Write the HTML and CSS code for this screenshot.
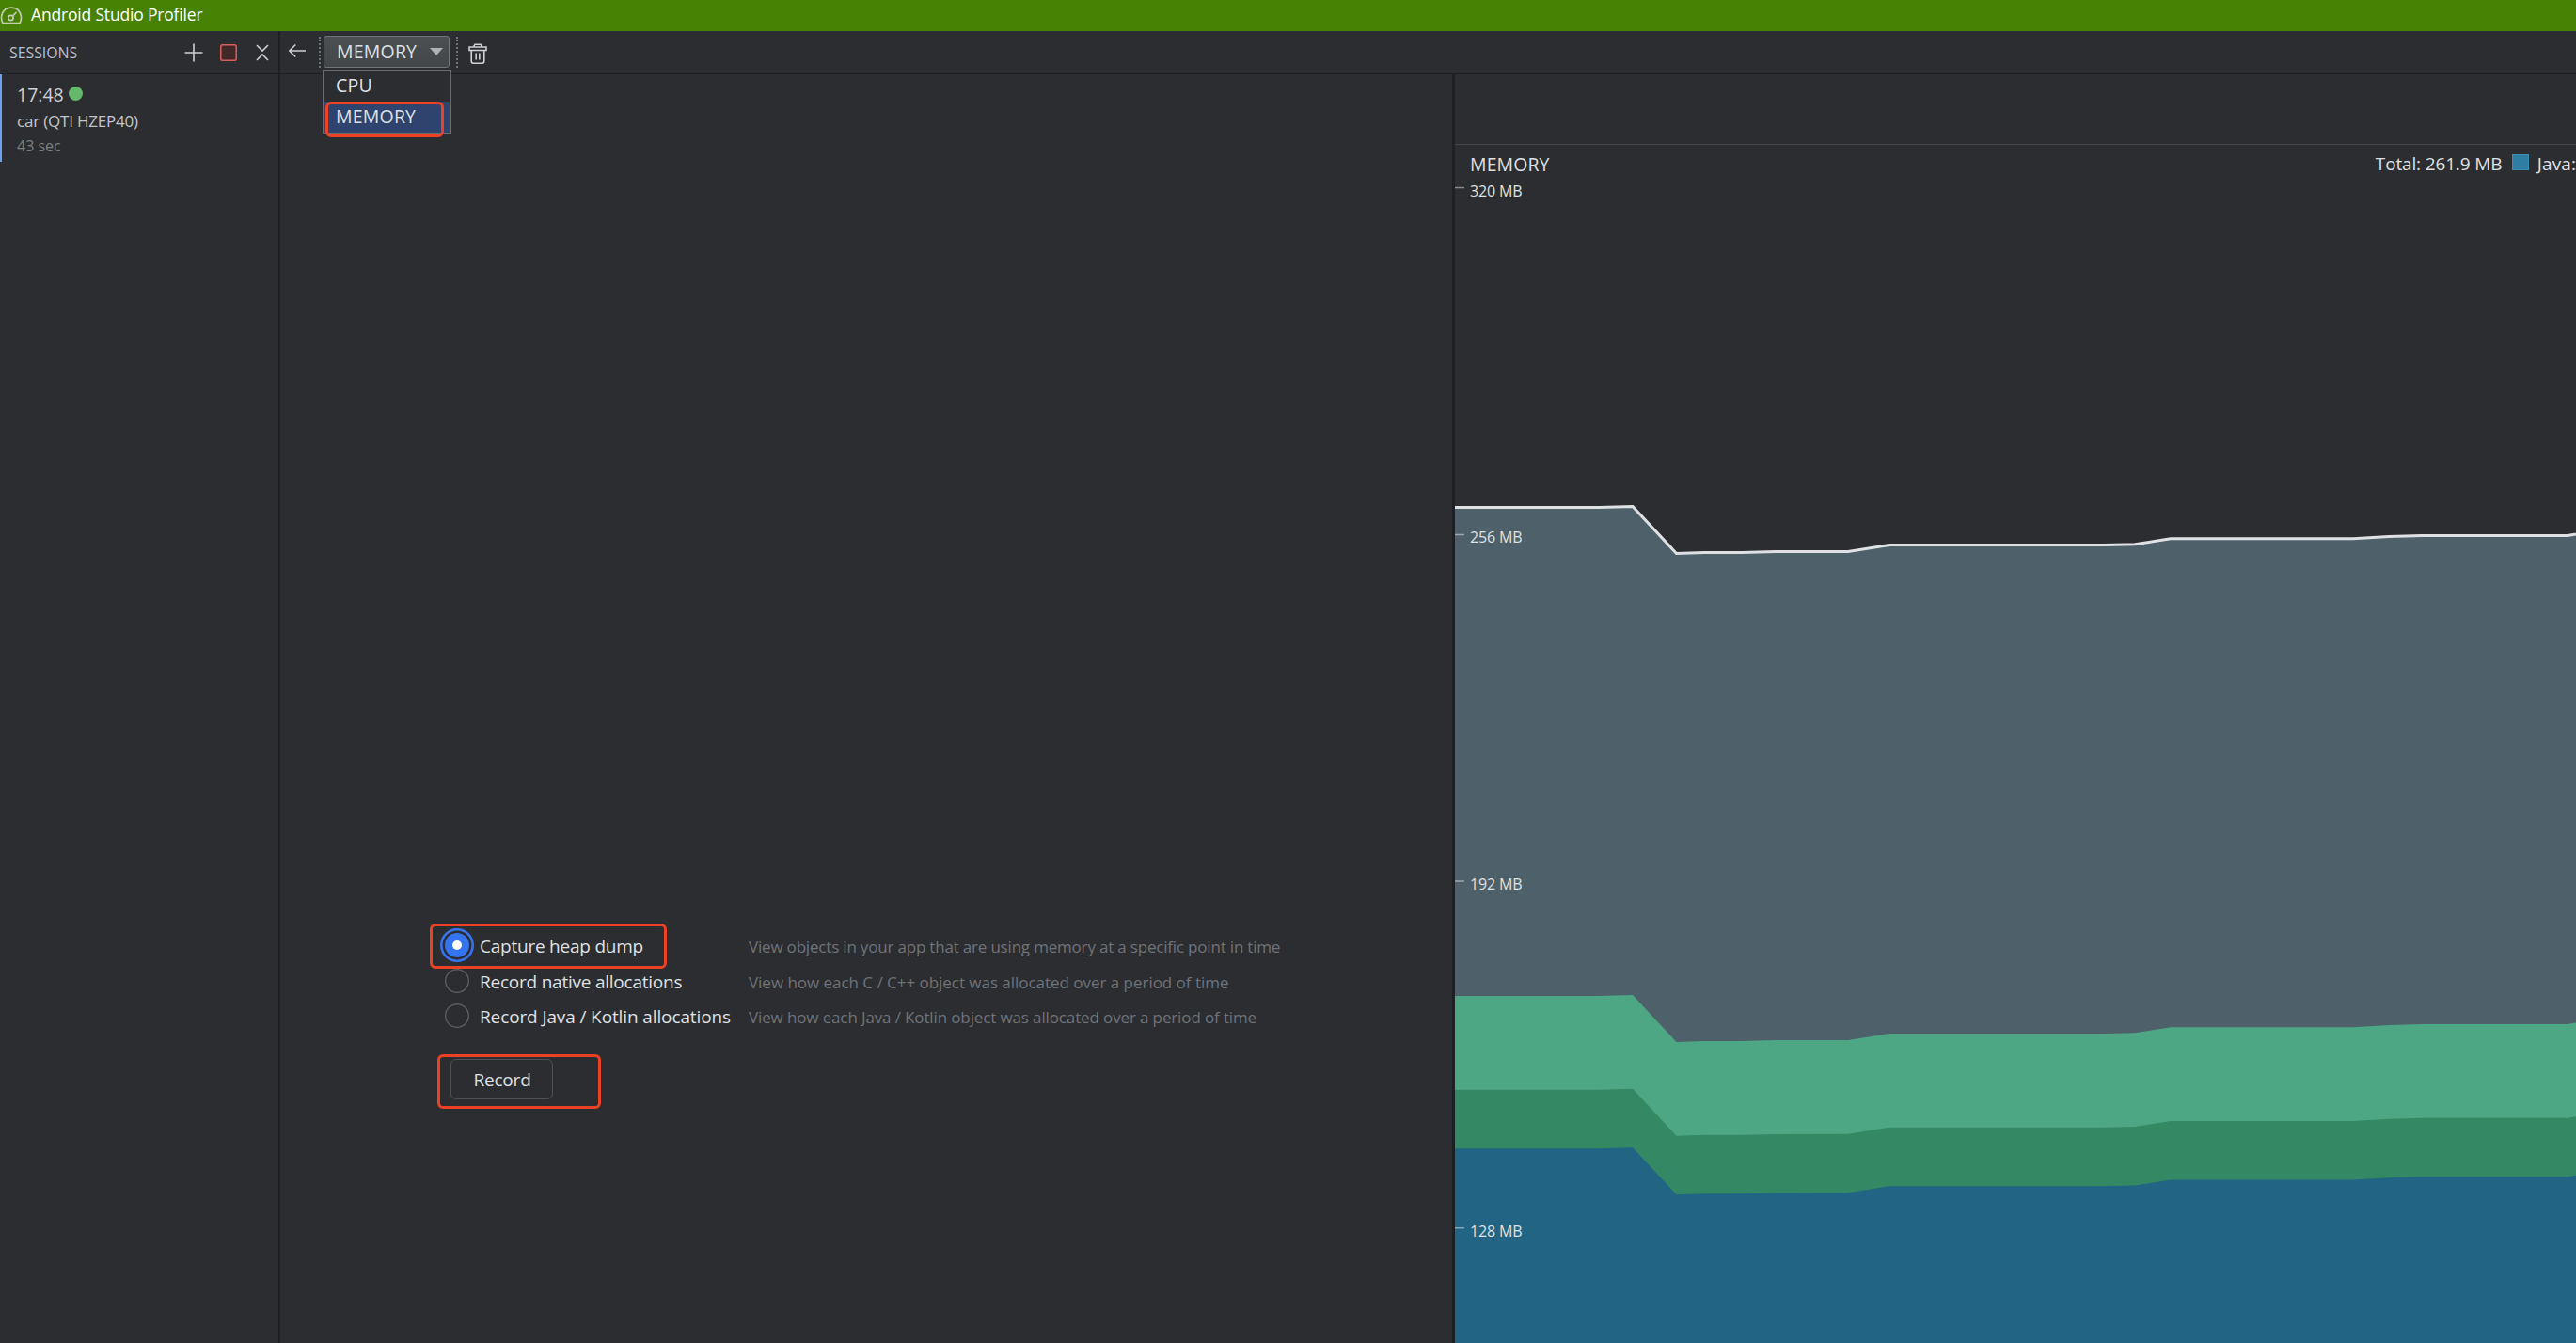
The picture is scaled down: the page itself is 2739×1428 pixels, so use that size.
FILE: index.html
```
<!DOCTYPE html>
<html lang="en">
<head>
  <meta charset="UTF-8" />
  <title>Android Studio Profiler</title>
  <link rel="stylesheet" href="styles.css">
</head>
<body>
  <header class="titlebar">
    <svg class="app-icon" width="24" height="20" viewBox="0 0 24 20">
      <path d="M3 17.7 C-0.5 11 2.5 1.2 12 1.2 C21.5 1.2 24.5 11 21 17.7 Z" />
      <circle cx="11.5" cy="12" r="2.6" />
      <path d="M13.3 10.2 L17.5 6" />
    </svg>
    <span>Android Studio Profiler</span>
  </header>

  <div class="workspace">
    <aside class="sessions">
      <div class="sessions-header">
        <span class="sessions-title">SESSIONS</span>
        <svg width="20" height="20" viewBox="0 0 20 20" class="icon icon-add"><path d="M10 .5 V19.5 M.5 10 H19.5" /></svg>
        <svg width="18" height="18" viewBox="0 0 18 18" class="icon icon-stop"><rect x=".75" y=".75" width="16.5" height="16.5" rx="2" /></svg>
        <svg width="14" height="18" viewBox="0 0 14 18" class="icon icon-collapse"><path d="M1 1 L7 7 L13 1 M1 17 L7 11 L13 17" /></svg>
      </div>
      <div class="session">
        <div class="session-time">17:48 <span class="live-dot"></span></div>
        <div class="session-device">car (QTI HZEP40)</div>
        <div class="session-length">43 sec</div>
      </div>
    </aside>

    <main class="stage">
      <div class="toolbar">
        <svg width="20" height="16" viewBox="0 0 20 16" class="icon icon-back"><path d="M19 8 H2 M8.3 1.5 L1.8 8 L8.3 14.5" /></svg>
        <span class="grip"></span>
        <div class="combo">
          <span>MEMORY</span>
          <svg width="14" height="8" viewBox="0 0 14 8"><path d="M0 0 H14 L7 8 Z" /></svg>
          <div class="combo-menu">
            <div class="combo-item">CPU</div>
            <div class="combo-item selected">MEMORY</div>
            <div class="mark mark-menu"></div>
          </div>
        </div>
        <span class="grip"></span>
        <svg width="20" height="24" viewBox="0 0 20 24" class="icon icon-trash">
          <path d="M1 5 H19 V8.5 H1 Z M5.5 4.8 L7 2.2 H13 L14.5 4.8 M3.2 8.5 V20 Q3.2 22.2 5.4 22.2 H14.6 Q16.8 22.2 16.8 20 V8.5 M8.2 11.5 V18.5 M11.8 11.5 V18.5" />
        </svg>
      </div>

      <div class="panes">
        <section class="capture">
          <div class="option">
            <svg class="radio" width="36" height="36" viewBox="0 0 36 36">
              <circle class="focus" cx="18" cy="18" r="16.7" />
              <circle class="fill" cx="18" cy="18" r="13" />
              <circle class="dot" cx="18" cy="18" r="5" />
            </svg>
            <span class="option-label">Capture heap dump</span>
            <span class="option-note">View objects in your app that are using memory at a specific point in time</span>
            <div class="mark mark-option"></div>
          </div>
          <div class="option">
            <svg class="radio" width="36" height="36" viewBox="0 0 36 36"><circle class="ring" cx="18" cy="18" r="12.3" /></svg>
            <span class="option-label">Record native allocations</span>
            <span class="option-note note-native">View how each C / C++ object was allocated over a period of time</span>
          </div>
          <div class="option">
            <svg class="radio" width="36" height="36" viewBox="0 0 36 36"><circle class="ring" cx="18" cy="18" r="12.3" /></svg>
            <span class="option-label label-java">Record Java / Kotlin allocations</span>
            <span class="option-note note-java">View how each Java / Kotlin object was allocated over a period of time</span>
          </div>
          <div class="record-row">
            <button class="record">Record</button>
            <div class="mark mark-record"></div>
          </div>
        </section>

        <section class="monitor">
          <div class="timeline-head"></div>
          <div class="chart">
            <svg class="plot" width="1192" height="1274" viewBox="0 0 1192 1274">
              <defs>
                <path id="area" d="M0 385.5 H153 L189 384.5 L235.5 434.5 L265 433.5 H305 L341 432.6 L418 432.5 L462 425.5 H690 L723 424.8 L761 418.7 H955 L993 416.5 L1028 415.5 H1183 L1192 414 V1300 H0 Z" />
              </defs>
              <use href="#area" class="total" />
              <use href="#area" class="native" y="519.5" />
              <use href="#area" class="graphics" y="619.3" />
              <use href="#area" class="java" y="681.8" />
              <path class="total-line" d="M0 385.5 H153 L189 384.5 L235.5 434.5 L265 433.5 H305 L341 432.6 L418 432.5 L462 425.5 H690 L723 424.8 L761 418.7 H955 L993 416.5 L1028 415.5 H1183 L1192 414" />
              <path class="ticks" d="M0 45.5 H10 M0 414.5 H10 M0 783 H10 M0 1151.7 H10" />
            </svg>
            <div class="chart-head">
              <span class="chart-title">MEMORY</span>
              <span class="legend-total">Total: 261.9 MB</span>
              <span class="swatch"></span>
              <span class="legend-java">Java:</span>
            </div>
            <span class="axis axis-320">320 MB</span>
            <span class="axis axis-256">256 MB</span>
            <span class="axis axis-192">192 MB</span>
            <span class="axis axis-128">128 MB</span>
          </div>
        </section>
      </div>
    </main>
  </div>
</body>
</html>
```
FILE: styles.css
```
* {
  box-sizing: border-box;
}

body {
  margin: 0;
  height: 100vh;
  overflow: hidden;
  display: flex;
  flex-direction: column;
  background-color: #2b2d30;
  color: #dfe1e5;
  font-family: "Open Sans", "Noto Sans", sans-serif;
  font-size: 19px;
  white-space: nowrap;
}

svg {
  display: block;
  flex: none;
}

.titlebar {
  height: 33px;
  flex: none;
  display: flex;
  align-items: center;
  gap: 9px;
  background-color: #488204;
  color: #ffffff;
  font-size: 17.5px;
  line-height: 31px;
  letter-spacing: -0.18px;
}

.titlebar span {
  padding-bottom: 2px;
}

.app-icon {
  fill: none;
  stroke: #c3cdb4;
  stroke-width: 1.7;
}

.workspace {
  flex: 1;
  display: flex;
  min-height: 0;
}

/* sessions */
.sessions {
  width: 298px;
  flex: none;
  border-right: 2px solid #1e1f22;
}

.sessions-header {
  height: 46px;
  display: flex;
  align-items: center;
  padding-left: 10px;
  border-bottom: 1px solid #1e1f22;
}

.sessions-title {
  width: 186px;
  padding-top: 1px;
  color: #bcbec4;
  font-size: 16px;
  letter-spacing: -0.1px;
}

.icon {
  fill: none;
  stroke: #ced0d6;
  stroke-width: 1.6;
}

.icon-add {
  margin-right: 18px;
}

.icon-stop {
  margin-right: 20px;
  fill: #402929;
  stroke: #db5c5c;
}

.session {
  height: 93px;
  padding: 7px 0 0 16px;
  border-left: 2px solid #6f9ff0;
}

.session-time {
  display: flex;
  align-items: center;
  height: 29px;
  color: #ced0d6;
  font-size: 19.5px;
}

.live-dot {
  width: 15px;
  height: 15px;
  margin: -3px 0 0 5px;
  border-radius: 50%;
  background-color: #65b96b;
}

.session-device {
  line-height: 28px;
  color: #c3c5ca;
  font-size: 17px;
  letter-spacing: -0.2px;
}

.session-length {
  line-height: 24px;
  color: #7d7f83;
  font-size: 16px;
}

/* toolbar */
.stage {
  flex: 1;
  min-width: 0;
  display: flex;
  flex-direction: column;
}

.toolbar {
  height: 46px;
  flex: none;
  display: flex;
  align-items: center;
  padding-left: 8px;
  border-bottom: 1px solid #1e1f22;
}

.icon-back {
  margin: -3px 13px 0 0;
}

.grip {
  height: 33px;
  border-left: 2px dotted #6f737a;
}

.combo {
  position: relative;
  width: 134px;
  height: 34px;
  margin: -2px 7px 0 3px;
  padding: 0 6px 0 13px;
  display: flex;
  align-items: center;
  justify-content: space-between;
  border: 1.5px solid #6e7679;
  border-radius: 3px;
  background: linear-gradient(#4b4f51, #434749);
  font-size: 19.5px;
  letter-spacing: 0.2px;
}

.combo svg {
  fill: #aeb1b3;
}

.combo-menu {
  position: absolute;
  z-index: 2;
  left: -2px;
  top: 35px;
  width: 137px;
  height: 68px;
  border: 1px solid #6b6c6e;
  border-right-width: 2px;
  background-color: #2b2d30;
}

.combo-item {
  height: 33px;
  padding-left: 13px;
  line-height: 32px;
}

.combo-item.selected {
  background-color: #2e436e;
}

.icon-trash {
  margin: 2px 0 0 11px;
}

/* red rectangles drawn over the controls */
.mark {
  position: absolute;
  border: 3px solid #ed4125;
  border-radius: 6px;
}

.mark-menu {
  left: 2px;
  top: 33px;
  width: 126px;
  height: 38px;
}

.mark-option {
  left: -11px;
  top: -5px;
  width: 252px;
  height: 48px;
}

.mark-record {
  left: -14px;
  top: -5px;
  width: 174px;
  height: 58px;
}

/* capture options */
.panes {
  flex: 1;
  display: flex;
  min-height: 0;
}

.capture {
  flex: 1;
  padding: 908px 0 0 170px;
}

.option {
  position: relative;
  height: 37.5px;
  display: flex;
  align-items: baseline;
  line-height: 38.5px;
}

.radio {
  align-self: center;
  margin: -1px 6px 0 0;
}

.radio .focus {
  fill: none;
  stroke: #3574f0;
  stroke-width: 2.6;
}

.radio .fill {
  fill: #3574f0;
}

.radio .dot {
  fill: #ffffff;
}

.radio .ring {
  fill: none;
  stroke: #5a5d63;
  stroke-width: 1.4;
}

.option-label {
  width: 286px;
  letter-spacing: -0.23px;
}

.label-java {
  letter-spacing: -0.12px;
}

.option-note {
  color: #6f737a;
  font-size: 17px;
  letter-spacing: -0.19px;
}

.note-native {
  letter-spacing: -0.03px;
}

.note-java {
  letter-spacing: -0.13px;
}

.record-row {
  position: relative;
  margin: 26.5px 0 0 11px;
}

.record {
  display: block;
  width: 109px;
  height: 43px;
  padding: 0 0 0 1px;
  border: 1.5px solid #4e5157;
  border-radius: 6px;
  background: none;
  color: #dfe1e5;
  font: inherit;
  letter-spacing: -0.2px;
}

/* memory monitor */
.monitor {
  width: 1195px;
  flex: none;
  display: flex;
  flex-direction: column;
  border-left: 3px solid #1e1f22;
}

.timeline-head {
  height: 75px;
  border-bottom: 1px solid #43454a;
}

.chart {
  flex: 1;
  position: relative;
  overflow: hidden;
}

.plot {
  position: absolute;
  left: 0;
  top: 0;
}

.total {
  fill: #4e606a;
}

.native {
  fill: #4ea784;
}

.graphics {
  fill: #348864;
}

.java {
  fill: #216484;
}

.total-line {
  fill: none;
  stroke: #dfe1e5;
  stroke-width: 3;
}

.ticks {
  stroke: #ffffff;
  stroke-opacity: 0.45;
  stroke-width: 1.6;
}

.chart-head {
  position: relative;
  display: flex;
  align-items: center;
  height: 28px;
  margin-top: 6px;
  padding-left: 16px;
}

.chart-title {
  width: 963px;
  font-size: 19.5px;
  letter-spacing: 0.1px;
}

.legend-total {
  width: 145px;
  letter-spacing: -0.15px;
}

.swatch {
  width: 18px;
  height: 17px;
  margin: -3px 9px 0 0;
  border: 1px solid #3d8db1;
  background-color: #2f7da2;
}

.legend-java {
  letter-spacing: 0.1px;
}

.axis {
  position: absolute;
  left: 16px;
  font-size: 16px;
  line-height: 20px;
  letter-spacing: -0.15px;
}

.axis-320 {
  top: 39px;
}

.axis-256 {
  top: 407px;
}

.axis-192 {
  top: 776px;
}

.axis-128 {
  top: 1145px;
}
```
